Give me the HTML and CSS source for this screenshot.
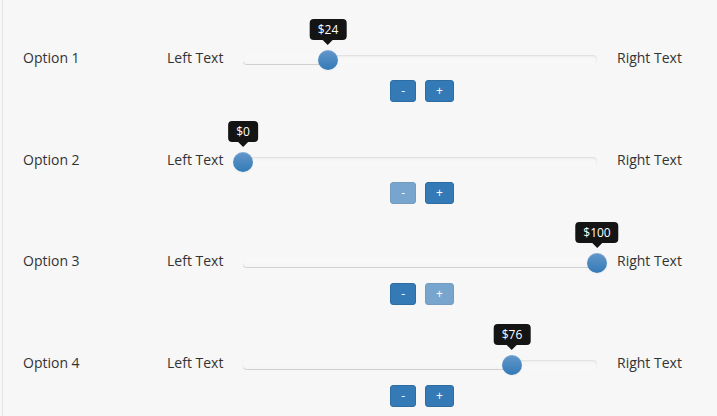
FILE: index.html
```html
<!DOCTYPE html>
<html lang="en">
<head>
<meta charset="utf-8">
<title>Sliders</title>
<link rel="stylesheet" href="styles.css">
</head>
<body>
<div class="page">
  <div class="row">
    <div class="label">Option 1</div>
    <div class="side left">Left Text</div>
    <div class="slider">
      <div class="track"><div class="selection" style="width:24%"></div></div>
      <div class="handle" style="left:24%"><div class="tip">$24</div></div>
    </div>
    <div class="side right">Right Text</div>
    <div class="buttons">
      <button class="btn">-</button>
      <button class="btn">+</button>
    </div>
  </div>
  <div class="row">
    <div class="label">Option 2</div>
    <div class="side left">Left Text</div>
    <div class="slider">
      <div class="track"><div class="selection" style="width:0%"></div></div>
      <div class="handle" style="left:0%"><div class="tip">$0</div></div>
    </div>
    <div class="side right">Right Text</div>
    <div class="buttons">
      <button class="btn disabled">-</button>
      <button class="btn">+</button>
    </div>
  </div>
  <div class="row">
    <div class="label">Option 3</div>
    <div class="side left">Left Text</div>
    <div class="slider">
      <div class="track"><div class="selection" style="width:100%"></div></div>
      <div class="handle" style="left:100%"><div class="tip">$100</div></div>
    </div>
    <div class="side right">Right Text</div>
    <div class="buttons">
      <button class="btn">-</button>
      <button class="btn disabled">+</button>
    </div>
  </div>
  <div class="row">
    <div class="label">Option 4</div>
    <div class="side left">Left Text</div>
    <div class="slider">
      <div class="track"><div class="selection" style="width:76%"></div></div>
      <div class="handle" style="left:76%"><div class="tip">$76</div></div>
    </div>
    <div class="side right">Right Text</div>
    <div class="buttons">
      <button class="btn">-</button>
      <button class="btn">+</button>
    </div>
  </div>
</div>
</body>
</html>
```
FILE: styles.css
```css
html, body {
  margin: 0;
  padding: 0;
  background: #f7f7f7;
}
body {
  font-family: "Open Sans", "Noto Sans", sans-serif;
  font-size: 14px;
  color: #333;
}
.page {
  margin-left: 2px;
  border-left: 1px solid #e4e4e4;
  padding: 23.5px 0 0 20px;
  min-height: 100vh;
  box-sizing: border-box;
}
.row {
  display: grid;
  grid-template-columns: 144px 76px 354px auto;
  grid-template-rows: auto auto;
  row-gap: 10px;
  align-items: center;
  padding: 22.5px 0 23px;
}
.label, .side {
  line-height: 20px;
  white-space: nowrap;
}
.right {
  padding-left: 20px;
}
.slider {
  grid-column: 3;
  position: relative;
  height: 20px;
  margin-top: 4px;
  display: flex;
  align-items: center;
}
.track {
  position: relative;
  width: 100%;
  height: 10px;
  border-radius: 4px;
  background: linear-gradient(#f5f5f5, #f9f9f9);
  box-shadow: inset 0 1px 2px rgba(0, 0, 0, 0.1);
}
.selection {
  position: absolute;
  left: 0;
  top: 0;
  bottom: 0;
  border-radius: 4px;
  background: linear-gradient(#f9f9f9, #f5f5f5);
  box-shadow: inset 0 -1px 0 rgba(0, 0, 0, 0.15);
}
.handle {
  position: absolute;
  top: 0;
  width: 20px;
  height: 20px;
  margin-left: -10px;
  border-radius: 50%;
  background: linear-gradient(#6397ca, #337ab7);
  box-shadow: inset 0 1px 0 rgba(255, 255, 255, 0.2), 0 1px 2px rgba(0, 0, 0, 0.05);
}
.tip {
  position: absolute;
  bottom: 30px;
  left: 50%;
  transform: translateX(-50%);
  padding: 3px 8px;
  font-size: 12px;
  line-height: 15px;
  color: #fff;
  background: #141414;
  border-radius: 4px;
  white-space: nowrap;
}
.tip::after {
  content: "";
  position: absolute;
  top: 100%;
  left: 50%;
  margin-left: -5px;
  border-style: solid;
  border-width: 5px 5px 0;
  border-color: #141414 transparent transparent;
}
.buttons {
  grid-column: 3;
  grid-row: 2;
  display: flex;
  justify-content: center;
  gap: 9px;
  padding-left: 4px;
}
.btn {
  font-family: "Open Sans", "Noto Sans", sans-serif;
  font-size: 12px;
  line-height: 18px;
  padding: 1px 10px;
  color: #fff;
  background: #337ab7;
  border: 1px solid #2e6da4;
  border-radius: 3px;
  margin: 0;
}
.btn.disabled {
  opacity: 0.65;
}
```
